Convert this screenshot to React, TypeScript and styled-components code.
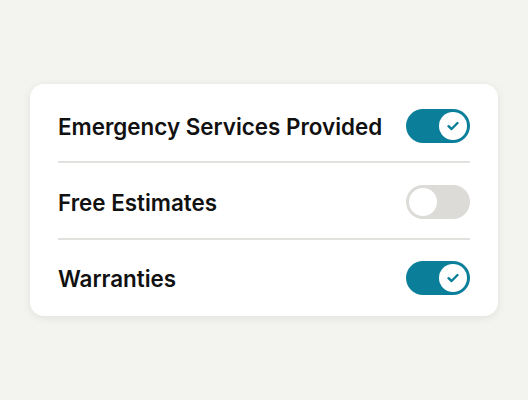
import styled, { createGlobalStyle } from "styled-components";

const GlobalStyle = createGlobalStyle`
    body {
        margin: 0;
        background: #f3f3ef;
        font-family: Inter, "Liberation Sans", sans-serif;
    }
`;

const items = [
    { label: "Emergency Services Provided", on: true },
    { label: "Free Estimates", on: false },
    { label: "Warranties", on: true },
];

const App = () => {
    return (
        <>
            <GlobalStyle />
            <Page>
                <Card>
                    {items.map((item, i) => (
                        <Row key={item.label} $first={i === 0} $last={i === items.length - 1}>
                            <Label>{item.label}</Label>
                            <Toggle $on={item.on}>
                                <Knob>
                                    {item.on && (
                                        <svg width="12" height="10" viewBox="0 0 12 10" fill="none">
                                            <path d="M1.5 5.2 L4.6 8 L10.5 2" stroke="#0b7f9a" strokeWidth="2.4" strokeLinecap="round" strokeLinejoin="round" />
                                        </svg>
                                    )}
                                </Knob>
                            </Toggle>
                        </Row>
                    ))}
                </Card>
            </Page>
        </>
    );
};

const Page = styled.div`
    width: 528px;
    height: 400px;
    box-sizing: border-box;
    padding: 84px 30px 0;
`;

const Card = styled.div`
    background: #ffffff;
    border-radius: 14px;
    box-shadow: 0 2px 8px rgba(0, 0, 0, 0.08);
    padding: 0 28px;
    display: flex;
    flex-direction: column;
`;

const Row = styled.div<{ $first: boolean; $last: boolean }>`
    display: flex;
    align-items: center;
    justify-content: space-between;
    padding: ${(p) => (p.$first ? "25px" : p.$last ? "21px" : "22px")} 0 ${(p) => (p.$first ? "18px" : p.$last ? "21px" : "19px")};
    border-bottom: ${(p) => (p.$last ? "none" : "2px solid #e2e1dd")};
`;

const Label = styled.span`
    font-size: 22.4px;
    font-weight: 600;
    color: #111111;
`;

const Toggle = styled.div<{ $on: boolean }>`
    width: 64px;
    height: 34px;
    border-radius: 17px;
    background: ${(p) => (p.$on ? "#0b7f9a" : "#dcdbd7")};
    display: flex;
    align-items: center;
    justify-content: ${(p) => (p.$on ? "flex-end" : "flex-start")};
    padding: 0 3px;
    box-sizing: border-box;
`;

const Knob = styled.div`
    width: 28px;
    height: 28px;
    border-radius: 50%;
    background: #ffffff;
    display: flex;
    align-items: center;
    justify-content: center;
`;

export default App;
